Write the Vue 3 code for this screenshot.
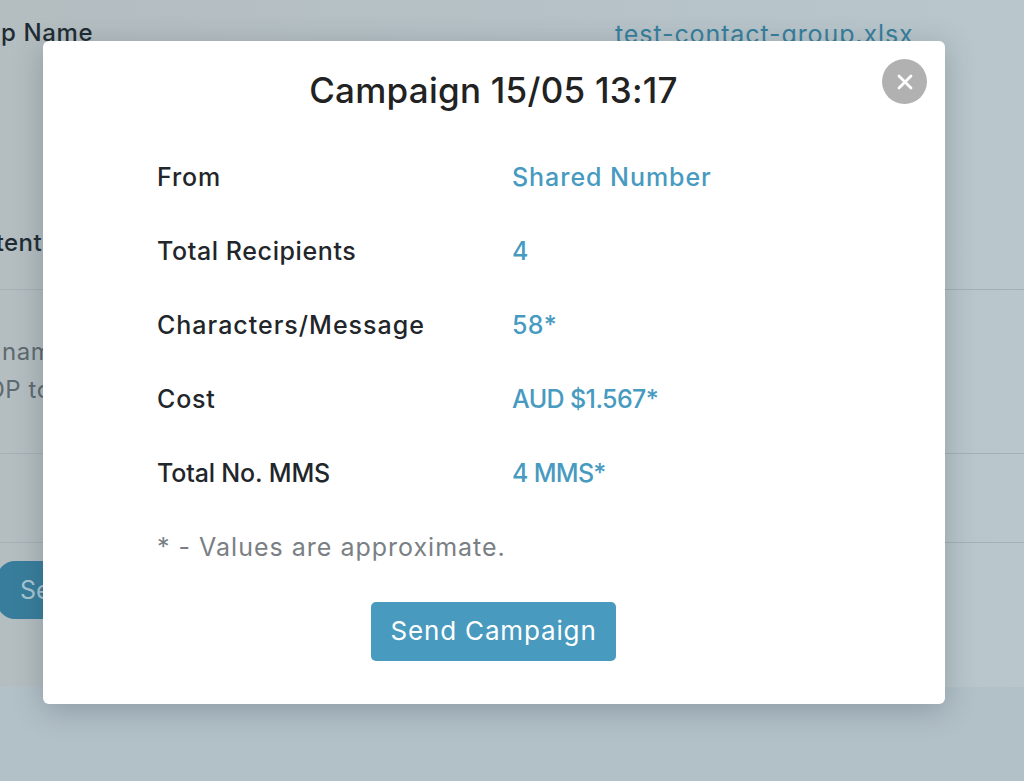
<script setup>
const rows = [
  { label: 'From', value: 'Shared Number', labelGap: 0.9, valueGap: 0.95 },
  { label: 'Total Recipients', value: '4', labelGap: 0.6, valueGap: 0 },
  { label: 'Characters/Message', value: '58*', labelGap: 1, valueGap: 0.4 },
  { label: 'Cost', value: 'AUD $1.567*', labelGap: 0.8, valueGap: -0.6 },
  { label: 'Total No. MMS', value: '4 MMS*', labelGap: -0.15, valueGap: -0.7 },
]
</script>

<template>
  <div class="page">
    <section class="card">
      <div class="group-row">
        <span class="bg-label group-label">Group Name</span>
        <span class="bg-link">test-contact-group.xlsx</span>
      </div>
      <div class="content-head">
        <span class="bg-label">Content</span>
      </div>
      <div class="message">
        <p class="greeting">Hey name</p>
        <p>STOP to opt out</p>
      </div>
      <div class="blank-row"></div>
      <div class="actions">
        <button class="bg-button" type="button">Send</button>
      </div>
    </section>

    <div class="overlay">
      <div class="modal">
        <button class="close" type="button" aria-label="Close">
          <svg width="16" height="16" viewBox="0 0 16 16">
            <path d="M2 2L14 14M14 2L2 14" stroke="#fff" stroke-width="2.8" stroke-linecap="round" />
          </svg>
        </button>
        <h1 class="title">Campaign 15/05 13:17</h1>
        <dl class="details">
          <div v-for="row in rows" :key="row.label" class="row">
            <dt :style="{ letterSpacing: row.labelGap + 'px' }">{{ row.label }}</dt>
            <dd :style="{ letterSpacing: row.valueGap + 'px' }">{{ row.value }}</dd>
          </div>
        </dl>
        <p class="note">* - Values are approximate.</p>
        <button class="send" type="button">Send Campaign</button>
      </div>
    </div>
  </div>
</template>

<style>
html, body {
  margin: 0;
  padding: 0;
  overflow: hidden;
}
</style>

<style scoped>
.page {
  position: relative;
  width: 1024px;
  height: 781px;
  overflow: hidden;
  background: #b2c0c8;
  font-family: Inter, "Noto Sans", "Liberation Sans", sans-serif;
}
.card {
  height: 687px;
  box-sizing: border-box;
  background: linear-gradient(90deg, #b4bdc0 0%, #b6c2c7 60%, #b9c7cc 100%);
  margin-left: -53px;
  display: flex;
  flex-direction: column;
}
.group-row {
  height: 68px;
  padding-top: 18px;
  box-sizing: border-box;
  display: flex;
}
.bg-label {
  width: 146px;
  font-size: 24px;
  font-weight: 500;
  letter-spacing: 0.4px;
  line-height: 30px;
  color: #1f2c33;
  white-space: nowrap;
}
.group-label {
  margin-left: -4px;
  letter-spacing: 0.6px;
}
.bg-link {
  margin-left: 526px;
  font-size: 25px;
  letter-spacing: 0.9px;
  line-height: 33px;
  color: #367f9d;
  white-space: nowrap;
}
.content-head {
  height: 222px;
  box-sizing: border-box;
  padding: 160px 0 0 1px;
  border-bottom: 1.5px solid #a6b0b4;
}
.message {
  height: 164px;
  box-sizing: border-box;
  padding: 43px 0 0 8px;
  border-bottom: 1.5px solid #a6b0b4;
  font-size: 24px;
  letter-spacing: 0.6px;
  color: #5d6a70;
}
.message p {
  margin: 0;
  line-height: 38px;
  white-space: nowrap;
}
.message .greeting {
  margin-left: -7px;
}
.blank-row {
  height: 89px;
  box-sizing: border-box;
  border-bottom: 1.5px solid #a6b0b4;
}
.actions {
  padding: 18px 0 0 50px;
}
.bg-button {
  height: 58px;
  width: 180px;
  border: 0;
  border-radius: 18px;
  background: #387e9c;
  color: #a9c6d2;
  font: 400 25px Inter, "Noto Sans", sans-serif;
  text-align: left;
  padding-left: 23px;
}
.overlay {
  position: absolute;
  inset: 0;
  padding: 41px 0 0 43px;
  box-sizing: border-box;
}
.modal {
  position: relative;
  width: 902px;
  height: 663px;
  box-sizing: border-box;
  padding-top: 24px;
  background: #fff;
  border-radius: 6px;
  box-shadow: 0 6px 30px rgba(40, 55, 65, 0.27);
  display: flex;
  flex-direction: column;
  align-items: center;
}
.close {
  position: absolute;
  top: 18px;
  right: 18px;
  width: 45px;
  height: 45px;
  border: 0;
  border-radius: 50%;
  padding: 0;
  background: #b1b1b1;
  display: flex;
  align-items: center;
  justify-content: center;
}
.title {
  margin: 0 1px 0 0;
  font-size: 35px;
  font-weight: 500;
  letter-spacing: 0.25px;
  line-height: 50px;
  color: #222;
}
.details {
  margin: 25px 0 0;
  width: 100%;
  padding-left: 114px;
  box-sizing: border-box;
}
.row {
  display: flex;
  height: 74px;
  align-items: center;
  font-size: 25px;
}
.row dt {
  width: 355px;
  font-weight: 500;
  color: #22262a;
}
.row dd {
  margin: 0;
  font-weight: 500;
  color: #479ac0;
}
.note {
  margin: 19px 0 0;
  width: 100%;
  padding-left: 114px;
  box-sizing: border-box;
  font-size: 25px;
  letter-spacing: 1px;
  line-height: 36px;
  color: #7a7f85;
}
.send {
  margin: 37px 1px 0 0;
  width: 245px;
  height: 59px;
  border: 0;
  border-radius: 5px;
  padding: 0 0 2px;
  background: #489abe;
  color: #fff;
  font: 400 26px Inter, "Noto Sans", sans-serif;
  letter-spacing: 0.85px;
}
</style>
